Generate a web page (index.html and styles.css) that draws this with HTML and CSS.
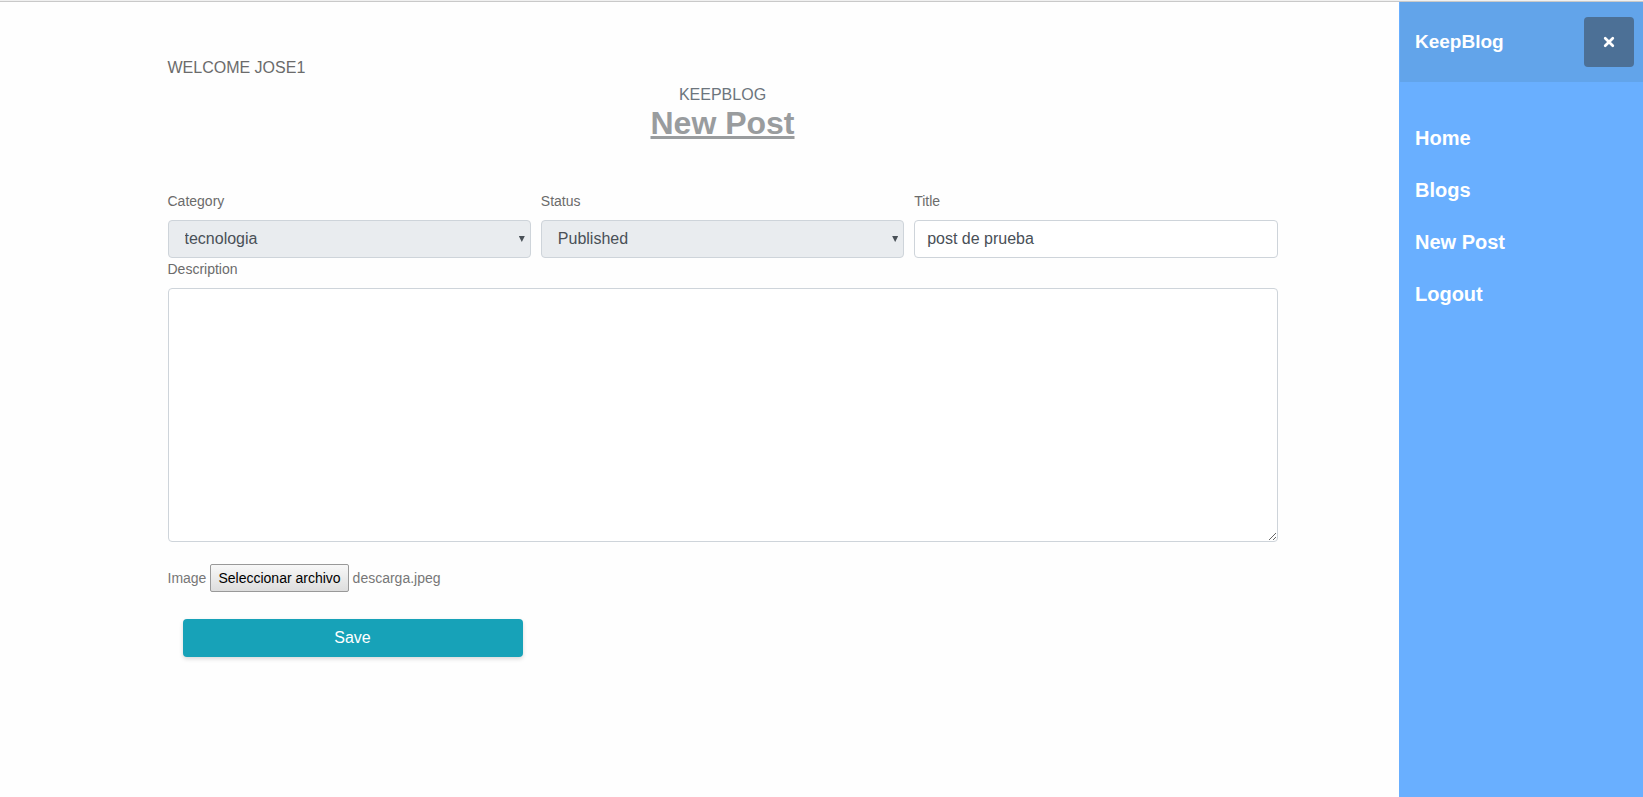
FILE: index.html
```
<!DOCTYPE html>
<html lang="en">
<head>
<meta charset="utf-8">
<title>KeepBlog - New Post</title>
<meta name="viewport" content="width=device-width, initial-scale=1">
<link rel="stylesheet" href="styles.css">
</head>
<body>
<div class="page">
  <main class="content">
    <div class="container">
      <p class="welcome">WELCOME JOSE1</p>
      <header class="heading">
        <p class="heading-brand">KEEPBLOG</p>
        <h1 class="heading-title">New Post</h1>
      </header>
      <form class="post-form">
        <div class="fields">
          <div class="field">
            <label class="label" for="category">Category</label>
            <div class="select">
              <select class="control control-select" id="category"><option>tecnologia</option></select>
            </div>
          </div>
          <div class="field">
            <label class="label" for="status">Status</label>
            <div class="select">
              <select class="control control-select" id="status"><option>Published</option></select>
            </div>
          </div>
          <div class="field">
            <label class="label" for="title">Title</label>
            <input class="control" id="title" type="text" value="post de prueba">
          </div>
        </div>
        <div class="field">
          <label class="label" for="description">Description</label>
          <textarea class="control control-area" id="description"></textarea>
        </div>
        <div class="upload">
          <span>Image</span>
          <input class="upload-input" id="image" type="file" aria-label="Image">
          <label class="upload-button" for="image">Seleccionar archivo</label>
          <span>descarga.jpeg</span>
        </div>
        <div class="actions">
          <button class="save" type="button">Save</button>
        </div>
      </form>
    </div>
  </main>
  <aside class="sidebar">
    <div class="sidebar-header">
      <span class="sidebar-brand">KeepBlog</span>
      <button class="close" type="button" aria-label="Close menu">
        <svg width="12" height="12" viewBox="0 0 12 12" aria-hidden="true"><path d="M2.2 2.2L9.8 9.8M9.8 2.2L2.2 9.8" stroke="#fff" stroke-width="2.7" stroke-linecap="round"/></svg>
      </button>
    </div>
    <nav class="nav">
      <a class="nav-link" href="#home">Home</a>
      <a class="nav-link" href="#blogs">Blogs</a>
      <a class="nav-link" href="#new-post">New Post</a>
      <a class="nav-link" href="#logout">Logout</a>
    </nav>
  </aside>
</div>
</body>
</html>
```
FILE: styles.css
```
* {
  box-sizing: border-box;
}

body {
  margin: 0;
  background: #fefefe;
  color: #6b6b6b;
  font-family: "Liberation Sans", Arial, sans-serif;
  font-size: 16px;
  line-height: 24px;
}

.page {
  display: flex;
  min-height: 100vh;
  border-top: 1px solid #f0f0f0;
}

.page::before {
  content: "";
  position: absolute;
  top: 1px;
  left: 0;
  right: 0;
  height: 1px;
  background: #c9c9c9;
}

.content {
  flex: 1;
  min-width: 0;
  padding: 55px 0 40px 46px;
}

.container {
  max-width: 1140px;
  margin: 0 auto;
  padding: 0 15px;
}

.welcome,
.heading-brand {
  margin: 0;
}

.heading {
  margin-top: 3px;
  text-align: center;
}

.heading-brand {
  color: #6c757d;
}

.heading-title {
  margin: 0;
  color: #999c9e;
  font-size: 32px;
  line-height: 32px;
  text-decoration: underline;
}

.post-form {
  margin-top: 51px;
  font-size: 14px;
}

.fields {
  display: grid;
  grid-template-columns: repeat(3, 1fr);
  gap: 10px;
}

.label {
  display: block;
  margin-bottom: 8px;
  line-height: 22px;
}

.control {
  display: block;
  width: 100%;
  height: 38px;
  padding: 6px 12px;
  border: 1px solid #ced4da;
  border-radius: 4px;
  background: #fff;
  color: #495057;
  font-family: inherit;
  font-size: 16px;
  line-height: 24px;
}

.select {
  position: relative;
}

.select::after {
  content: "";
  position: absolute;
  top: 16px;
  right: 6px;
  width: 6px;
  height: 6px;
  background: #495057;
  clip-path: polygon(0 0, 100% 0, 50% 100%);
  pointer-events: none;
}

.control-select {
  padding: 6px 16px;
  background: #e9ecef;
  appearance: none;
}

.control-area {
  height: 254px;
  resize: vertical;
}

.upload {
  display: flex;
  align-items: center;
  gap: 4px;
  margin-top: 22px;
  color: #777;
}

.upload-input {
  position: absolute;
  width: 1px;
  height: 1px;
  opacity: 0;
}

.upload-button {
  padding: 1px 7px;
  border: 1px solid #999;
  border-radius: 2px;
  background: linear-gradient(#f8f8f8, #dddddd);
  color: #000;
}

.actions {
  display: grid;
  grid-template-columns: repeat(3, 1fr);
  margin-top: 27px;
}

.save {
  height: 38px;
  margin: 0 15px;
  border: 0;
  border-radius: 4px;
  background: #17a2b8;
  box-shadow: 0 2px 4px rgba(0, 0, 0, 0.15);
  color: #fff;
  font-family: inherit;
  font-size: 16px;
}

.sidebar {
  width: 244px;
  padding-top: 1px;
  border-left: 1px solid #69afff;
  background: #69afff;
  color: #fff;
  font-weight: bold;
}

.sidebar-header {
  display: flex;
  align-items: center;
  justify-content: space-between;
  padding: 15px 9px 15px 15px;
  background: #62a4ea;
}

.sidebar-brand {
  font-size: 19px;
}

.close {
  display: flex;
  align-items: center;
  justify-content: center;
  width: 50px;
  height: 50px;
  border: 0;
  border-radius: 4px;
  background: #4c7096;
}

.nav {
  padding: 30px 0;
}

.nav-link {
  display: block;
  padding: 14px 15px;
  color: #fff;
  font-size: 20px;
  text-decoration: none;
}
```
